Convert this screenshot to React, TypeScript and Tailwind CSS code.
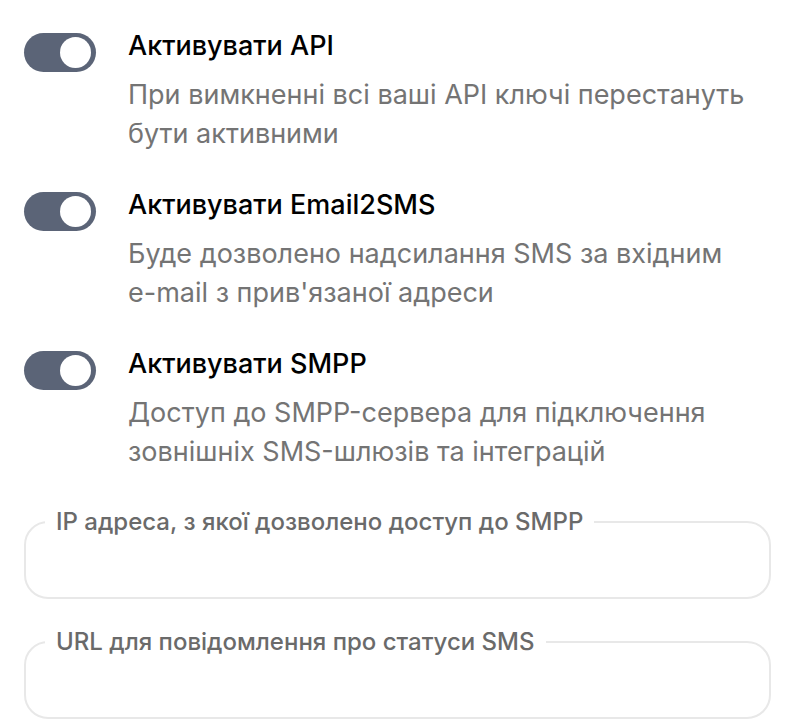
import React from 'react';

const ITEMS = [
  {
    title: 'Активувати API',
    lines: ['При вимкненні всі ваші API ключі перестануть', 'бути активними'],
  },
  {
    title: 'Активувати Email2SMS',
    lines: ['Буде дозволено надсилання SMS за вхідним', "e-mail з прив'язаної адреси"],
  },
  {
    title: 'Активувати SMPP',
    lines: ['Доступ до SMPP-сервера для підключення', 'зовнішніх SMS-шлюзів та інтеграцій'],
  },
];

const FIELDS = ['IP адреса, з якої дозволено доступ до SMPP', 'URL для повідомлення про статуси SMS'];

function Toggle() {
  return (
    <div className="mt-[2px] flex h-[39px] w-[72px] shrink-0 items-center justify-end rounded-full bg-[#5b6477] pr-[5px]">
      <div className="h-[31px] w-[31px] rounded-full bg-white" />
    </div>
  );
}

export default function App() {
  return (
    <div className="min-h-screen bg-white px-[24px] pt-[31px]" style={{ fontFamily: 'Inter, "Noto Sans", sans-serif' }}>
      <div className="flex flex-col gap-[37px]">
        {ITEMS.map((item) => (
          <div key={item.title} className="flex gap-[32px]">
            <Toggle />
            <div className="whitespace-nowrap">
              <div className="text-[27px] font-medium leading-[30px] text-black">{item.title}</div>
              <div className="mt-[14px] text-[27px] leading-[39px] text-[#747474]">
                {item.lines.map((l) => (
                  <div key={l}>{l}</div>
                ))}
              </div>
            </div>
          </div>
        ))}
      </div>

      <div className="mt-[37px] flex flex-col gap-[29px] pr-[1px]">
        {FIELDS.map((f) => (
          <fieldset key={f} className="rounded-[24px] border-2 border-[#e8e8e8] px-[19px]">
            <legend className="px-[11px] text-[24px] font-medium leading-[28px] text-[#6a6a6a] whitespace-nowrap">{f}</legend>
            <div className="h-[61px]" />
          </fieldset>
        ))}
      </div>
    </div>
  );
}
